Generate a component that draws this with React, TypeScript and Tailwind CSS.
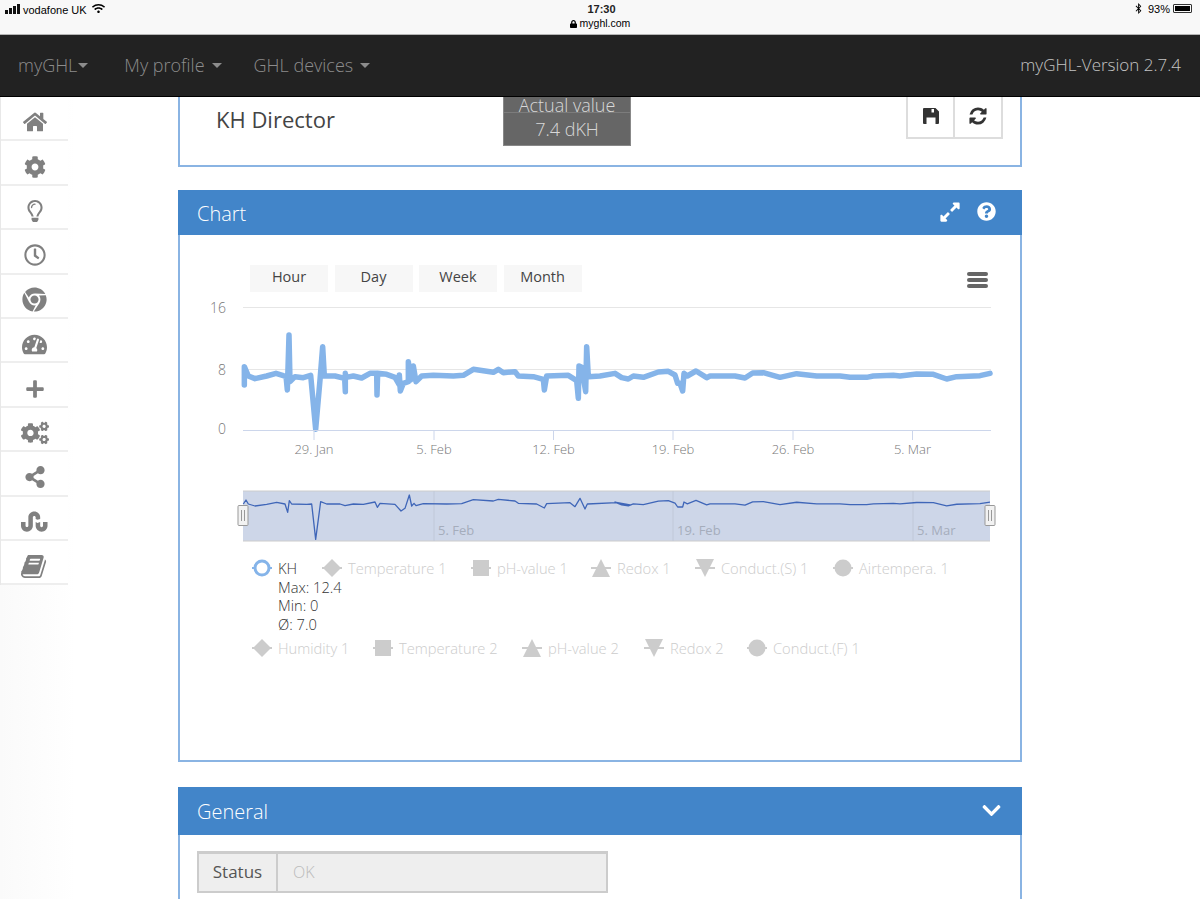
import React from "react";
import {
  FaHome, FaCog, FaRegLightbulb, FaRegClock, FaChrome, FaTachometerAlt, FaPlus, FaCogs,
  FaShareAlt, FaStumbleupon, FaExpandAlt, FaQuestionCircle, FaChevronDown, FaWifi,
  FaBluetoothB, FaLock,
} from "react-icons/fa";

const BookIcon = ({ className }: { className?: string }) => (
  <svg viewBox="0 0 1792 1792" className={className} fill="currentColor">
    <path d="M1639 478q40 57 18 129l-275 906q-19 64-76.5 107.5t-122.5 43.5h-923q-77 0-148.5-53.5t-99.5-131.5q-24-67-2-127 0-4 3-27t4-37q1-8-3-21.5t-3-19.5q2-11 8-21t16.5-23.5 16.5-23.5q23-38 45-91.5t30-91.5q3-10 .5-30t-.5-28q3-11 17-28t17-23q21-36 42-92t25-90q1-9-2.5-32t.5-28q4-13 22-30.5t22-22.5q19-26 42.5-84.5t27.5-96.5q1-8-3-25.5t-2-26.5q2-8 9-18t18-23 17-21q8-12 16.5-30.5t15-35 16-36 19.5-32 26.5-23.5 36-11.5 47.5 5.5l-1 3q38-9 51-9h761q74 0 114 56t18 130l-274 906q-36 119-71.5 153.5t-128.5 34.5h-869q-27 0-38 15-11 16-1 43 24 70 144 70h923q29 0 56-15.5t35-41.5l300-987q7-22 5-57 38 15 59 43zm-1064 2q-4 13 2 22.5t20 9.5h608q13 0 25.5-9.5t16.5-22.5l21-64q4-13-2-22.5t-20-9.5h-608q-13 0-25.5 9.5t-16.5 22.5zm-83 256q-4 13 2 22.5t20 9.5h608q13 0 25.5-9.5t16.5-22.5l21-64q4-13-2-22.5t-20-9.5h-608q-13 0-25.5 9.5t-16.5 22.5z" />
  </svg>
);

const RefreshIcon = ({ className }: { className?: string }) => (
  <svg viewBox="0 0 1792 1792" className={className} fill="currentColor">
    <path d="M1639 1056q0 5-1 7-64 268-268 434.5t-478 166.5q-146 0-282.5-55t-243.5-157l-129 129q-19 19-45 19t-45-19-19-45v-448q0-26 19-45t45-19h448q26 0 45 19t19 45-19 45l-137 137q71 66 161 102t187 36q134 0 250-65t186-179q11-17 53-117 8-23 30-23h192q13 0 22.5 9.5t9.5 22.5zm25-800v448q0 26-19 45t-45 19h-448q-26 0-45-19t-19-45 19-45l138-138q-148-137-349-137-134 0-250 65t-186 179q-11 17-53 117-8 23-30 23h-199q-13 0-22.5-9.5t-9.5-22.5v-7q65-268 270-434.5t480-166.5q146 0 284 55.5t245 156.5l130-129q19-19 45-19t45 19 19 45z" />
  </svg>
);

const FloppyIcon = ({ className }: { className?: string }) => (
  <svg viewBox="0 0 16 16" className={className}>
    <path fillRule="evenodd" fill="currentColor" d="M1 0H12.5L16 3.5V15a1 1 0 0 1-1 1H1a1 1 0 0 1-1-1V1a1 1 0 0 1 1-1zM8.5 1V4.5H11V1zM3.5 9.5V16H12.5V9.5z" />
  </svg>
);

const z5: number[][] = [[133,285],[133,230],[145,258],[165,266],[200,258],[228,250],[250,257],[258,258],[262,300],[267,135],[270,275],[285,260],[310,263],[332,256],[347,418],[360,270],[368,170],[373,258],[405,258],[434,265],[436,305],[436,250],[438,262],[460,258],[485,264],[510,250],[530,250],[531,315],[533,250],[560,253],[585,262],[598,285],[598,255],[601,303],[610,280],[625,275],[625,215],[632,270],[640,228],[648,275],[665,258],[700,256],[760,258],[790,256],[820,238],[880,247],[895,238],[910,248],[945,245],[955,258],[1000,260],[1030,268],[1033,300],[1040,258],[1105,256],[1130,272],[1135,325],[1137,228],[1145,232],[1157,305],[1160,170],[1165,260],[1200,258]];
const z6: number[][] = [[0,258],[45,250],[65,263],[85,267],[100,258],[130,262],[175,246],[205,244],[225,255],[233,280],[240,280],[248,303],[252,250],[262,258],[288,243],[320,263],[330,258],[385,258],[405,258],[435,264],[458,249],[490,248],[540,262],[590,251],[650,258],[720,258],[750,262],[800,262],[820,258],[880,256],[900,258],[950,252],[1000,253],[1040,267],[1070,260],[1140,257],[1170,250]];
const mainPts = [
  ...z5.map(([x, y]) => [200 + x / 3, 290 + y / 3]),
  ...z6.map(([x, y]) => [600 + x / 3, 290 + y / 3]),
].map((p) => p.join(",")).join(" ");

const z7: number[][] = [[40,72],[48,60],[55,72],[75,78],[110,73],[140,67],[165,72],[173,97],[178,62],[185,72],[230,73],[245,72],[257,178],[272,65],[290,72],[330,72],[345,77],[370,72],[400,73],[435,66],[442,82],[450,70],[495,73],[513,93],[525,85],[538,45],[545,78],[552,70],[558,77],[580,71],[650,72],[695,71],[730,59],[790,63],[805,58],[855,63],[865,70],[920,72],[943,84],[950,71],[1020,68],[1035,80],[1050,55],[1065,87],[1072,72],[1160,68],[1200,75]];
const navRight: number[][] = z6
  .filter(([x]) => x > 10)
  .map(([x, y]) => [600 + x / 3, Math.min(507, 540 - (430 - (290 + y / 3)) * 0.67)]);
const navPts = [
  ...z7.map(([x, y]) => [230 + x / 3, 480 + y / 3]),
  ...navRight,
].map((p) => p.join(",")).join(" ");

const sideIcons = [
  <FaHome className="w-[24px] h-[24px]" />,
  <FaCog className="w-[22px] h-[22px]" />,
  <FaRegLightbulb className="w-[22px] h-[22px]" />,
  <FaRegClock className="w-[22px] h-[22px]" />,
  <FaChrome className="w-[25px] h-[25px]" />,
  <FaTachometerAlt className="w-[25px] h-[25px]" />,
  <FaPlus className="w-[20px] h-[20px]" />,
  <FaCogs className="w-[28px] h-[26px]" />,
  <FaShareAlt className="w-[22px] h-[22px]" />,
  <FaStumbleupon className="w-[27px] h-[27px]" />,
  <BookIcon className="w-[27px] h-[27px]" />,
];

type Shape = "circle" | "diamond" | "square" | "up" | "down" | "hex";

const Marker = ({ shape }: { shape: Shape }) => (
  <svg viewBox="0 0 20 20" className="w-[20px] h-[20px] shrink-0">
    {shape === "circle" && (
      <>
        <line x1="0" y1="10" x2="20" y2="10" stroke="#85b4e9" strokeWidth="2" />
        <circle cx="10" cy="10" r="7" fill="#fff" stroke="#85b4e9" strokeWidth="3" />
      </>
    )}
    {shape !== "circle" && <line x1="0" y1="10" x2="20" y2="10" stroke="#ccc" strokeWidth="2" />}
    {shape === "diamond" && <polygon points="10,1 19,10 10,19 1,10" fill="#ccc" />}
    {shape === "square" && <rect x="2" y="2" width="16" height="16" fill="#ccc" />}
    {shape === "up" && <polygon points="10,1 19,19 1,19" fill="#ccc" />}
    {shape === "down" && <polygon points="1,1 19,1 10,19" fill="#ccc" />}
    {shape === "hex" && <circle cx="10" cy="10" r="8.5" fill="#ccc" />}
  </svg>
);

const LegendItem = ({ shape, label, w }: { shape: Shape; label: string; w: string }) => (
  <div className={`flex items-center gap-[6px] text-[14.7px] leading-[18px] font-light text-[#ccc] whitespace-nowrap ${w}`}>
    <Marker shape={shape} />
    <span>{label}</span>
  </div>
);

const Tick = ({ x, label }: { x: number; label: string }) => (
  <>
    <line x1={x} y1="430" x2={x} y2="440" stroke="#ccd6eb" />
    <text x={x} y="454" textAnchor="middle" fontSize="13" fontWeight="300" fill="#777">{label}</text>
  </>
);

const NavTick = ({ x, label }: { x: number; label: string }) => (
  <>
    <line x1={x} y1="491" x2={x} y2="541" stroke="#c0c8d8" />
    <text x={x + 4} y="535" fontSize="13" fill="#a5adbc">{label}</text>
  </>
);

const Handle = ({ x }: { x: number }) => (
  <>
    <rect x={x - 5} y="505.5" width="10" height="20" rx="1" fill="#f2f2f2" stroke="#999" />
    <line x1={x - 1.5} y1="510" x2={x - 1.5} y2="521" stroke="#999" />
    <line x1={x + 1.5} y1="510" x2={x + 1.5} y2="521" stroke="#999" />
  </>
);

export default function App() {
  return (
    <div className="w-[1200px] h-[899px] overflow-hidden bg-white flex flex-col font-['Open_Sans',sans-serif] text-[#333]">
      {/* iOS status bar */}
      <div className="h-[35px] shrink-0 bg-[#f8f8f8] border-b border-[#b5b5b5] flex justify-between px-[5px] pt-[3px] font-['Liberation_Sans',sans-serif] text-black">
        <div className="flex items-start w-[300px] gap-[4px]">
          <div className="flex items-end gap-[1px] h-[10px] mt-[1px]">
            <div className="w-[3px] h-[4px] bg-[#111]" />
            <div className="w-[3px] h-[6px] bg-[#111]" />
            <div className="w-[3px] h-[8px] bg-[#111]" />
            <div className="w-[3px] h-[10px] bg-[#111]" />
          </div>
          <span className="text-[11px] leading-[14px] ml-[-1px]">vodafone UK</span>
          <FaWifi className="w-[13px] h-[11px] ml-[1px]" />
        </div>
        <div className="flex flex-col items-center leading-none">
          <span className="text-[11px] leading-[13px] font-bold text-[#222] ml-[3px]">17:30</span>
          <span className="text-[10.5px] leading-[13px] flex items-center gap-[3px] mt-[1px]">
            <FaLock className="w-[7px] h-[8px]" />
            myghl.com
          </span>
        </div>
        <div className="flex items-start justify-end w-[300px] gap-[3px]">
          <FaBluetoothB className="w-[9px] h-[11px] mr-[2px]" />
          <span className="text-[11px] leading-[13px]">93%</span>
          <div className="w-[19px] h-[9px] border border-[#333] p-[1px] mt-[1px] rounded-[1px] mr-[3px]">
            <div className="w-full h-full bg-black" />
          </div>
        </div>
      </div>

      {/* Navbar */}
      <div className="h-[62px] shrink-0 bg-[#222] border-b border-black flex items-center justify-between pl-[18px] pr-[19px] text-[18px] font-light text-[#8c8c8c]">
        <div className="flex items-center">
          <span>myGHL</span>
          <span className="w-0 h-0 border-x-[5px] border-x-transparent border-t-[5px] border-t-[#8c8c8c] ml-[1px]" />
          <span className="ml-[36px]">My profile</span>
          <span className="w-0 h-0 border-x-[5px] border-x-transparent border-t-[5px] border-t-[#8c8c8c] ml-[7px]" />
          <span className="ml-[32px]">GHL devices</span>
          <span className="w-0 h-0 border-x-[5px] border-x-transparent border-t-[5px] border-t-[#8c8c8c] ml-[7px]" />
        </div>
        <span className="text-[#c4c4c4] text-[17px] -mt-[1px]">myGHL-Version 2.7.4</span>
      </div>

      <div className="flex flex-1 min-h-0">
        {/* Sidebar */}
        <div className="w-[75px] shrink-0 bg-gradient-to-r from-[#fafafa] to-white">
          <div className="w-[68px] border-l border-[#e8e8e8] bg-white">
            {sideIcons.map((icon, i) => (
              <div key={i} className="h-[44.4px] pt-[8px] flex items-center justify-center border-b-2 border-[#eeeeee] text-[#808080]">
                {icon}
              </div>
            ))}
          </div>
        </div>

        {/* Main */}
        <div className="w-[844px] ml-[103px] flex flex-col">
          {/* KH Director panel */}
          <div className="relative h-[70px] shrink-0 border-x-2 border-b-2 border-[#8ab4e3] flex items-start justify-end pr-[17px]">
            <div className="absolute left-[36px] top-[5px] text-[22px] leading-[34px] text-[#444]">KH Director</div>
            <div className="absolute left-[323px] top-0 w-[128px] h-[49px] bg-[#666] border border-[#888] border-t-0 text-[#d8d8d8] font-light flex flex-col items-center">
              <div className="h-[16px] w-full border-b border-[#7c7c7c] leading-[16px] text-center text-[18px]">Actual value</div>
              <div className="flex-1 flex items-center text-[18px]">7.4 dKH</div>
            </div>
            <div className="flex border-2 border-t-0 border-[#ddd] h-[42px]">
              <div className="w-[47px] flex items-center justify-center border-r-2 border-[#ddd] text-[#333] pb-[2px]">
                <FloppyIcon className="w-[16px] h-[16px]" />
              </div>
              <div className="w-[46px] flex items-center justify-center text-[#333] pb-[2px]">
                <RefreshIcon className="w-[20px] h-[20px]" />
              </div>
            </div>
          </div>

          {/* Chart panel */}
          <div className="h-[572px] shrink-0 mt-[23px] border-2 border-t-0 border-[#8ab4e3] flex flex-col">
            <div className="h-[45px] -mx-[2px] bg-[#4285c9] flex items-center justify-between pl-[19px] pr-[26px] text-white">
              <span className="text-[20px] font-light mt-[3px]">Chart</span>
              <div className="flex items-center gap-[16px]">
                <FaExpandAlt className="w-[22px] h-[22px] -mt-[2px]" />
                <FaQuestionCircle className="w-[19px] h-[19px] -mt-[3px]" />
              </div>
            </div>
            <div className="flex justify-between items-start pl-[70px] pr-[32px] pt-[30px] h-[60px]">
              <div className="flex gap-[6.5px]">
                {["Hour", "Day", "Week", "Month"].map((b) => (
                  <div key={b} className="w-[78px] h-[27px] pb-[4px] bg-[#f7f7f7] flex items-center justify-center text-[14.5px] text-[#444]">{b}</div>
                ))}
              </div>
              <div className="flex flex-col gap-[2px] w-[21px] mt-[7px]">
                <div className="h-[4px] rounded-full bg-[#666]" />
                <div className="h-[4px] rounded-full bg-[#666]" />
                <div className="h-[4px] rounded-full bg-[#666]" />
              </div>
            </div>
            <svg viewBox="200 295 800 255" width="800" height="255" className="block ml-[20px] shrink-0 font-['Open_Sans',sans-serif]">
              <line x1="243" y1="307.5" x2="991" y2="307.5" stroke="#e6e6e6" />
              <line x1="243" y1="369.5" x2="991" y2="369.5" stroke="#e6e6e6" />
              <text x="226" y="313" textAnchor="end" fontSize="14" fontWeight="300" fill="#777">16</text>
              <text x="226" y="375" textAnchor="end" fontSize="14" fontWeight="300" fill="#777">8</text>
              <text x="226" y="434" textAnchor="end" fontSize="14" fontWeight="300" fill="#777">0</text>
              <polyline points={mainPts} fill="none" stroke="#85b4e9" strokeWidth="5.5" strokeLinejoin="round" strokeLinecap="round" />
              <line x1="243" y1="430.5" x2="991" y2="430.5" stroke="#ccd6eb" />
              <Tick x={314} label="29. Jan" />
              <Tick x={434} label="5. Feb" />
              <Tick x={553.5} label="12. Feb" />
              <Tick x={673} label="19. Feb" />
              <Tick x={793} label="26. Feb" />
              <Tick x={912.5} label="5. Mar" />
              <rect x="243" y="491" width="747" height="50" fill="#cdd6e8" />
              <line x1="243" y1="491" x2="990" y2="491" stroke="#ccc" />
              <line x1="243" y1="541" x2="990" y2="541" stroke="#ccc" />
              <NavTick x={434} label="5. Feb" />
              <NavTick x={673} label="19. Feb" />
              <NavTick x={913} label="5. Mar" />
              <polyline points={navPts} fill="none" stroke="#3f66b8" strokeWidth="1.3" strokeLinejoin="round" />
              <Handle x={243} />
              <Handle x={990} />
            </svg>
            <div className="pl-[72px] pt-[8px]">
              <div className="flex h-[80px] items-start">
                <div className="w-[70px] flex flex-col text-[14.7px] leading-[18.3px] font-light whitespace-nowrap">
                  <div className="flex items-center gap-[6px]">
                    <Marker shape="circle" />
                    <span>KH</span>
                  </div>
                  <div className="pl-[26px]">Max: 12.4</div>
                  <div className="pl-[26px]">Min: 0</div>
                  <div className="pl-[26px]">Ø: 7.0</div>
                </div>
                <LegendItem shape="diamond" label="Temperature 1" w="w-[149px]" />
                <LegendItem shape="square" label="pH-value 1" w="w-[120px]" />
                <LegendItem shape="up" label="Redox 1" w="w-[104px]" />
                <LegendItem shape="down" label="Conduct.(S) 1" w="w-[138px]" />
                <LegendItem shape="hex" label="Airtempera. 1" w="w-[130px]" />
              </div>
              <div className="flex">
                <LegendItem shape="diamond" label="Humidity 1" w="w-[121px]" />
                <LegendItem shape="square" label="Temperature 2" w="w-[149px]" />
                <LegendItem shape="up" label="pH-value 2" w="w-[122px]" />
                <LegendItem shape="down" label="Redox 2" w="w-[103px]" />
                <LegendItem shape="hex" label="Conduct.(F) 1" w="w-[130px]" />
              </div>
            </div>
          </div>

          {/* General panel */}
          <div className="mt-[25px] flex-1 border-x-2 border-[#8ab4e3]">
            <div className="h-[48px] -mx-[2px] bg-[#4285c9] flex items-center justify-between pl-[19px] pr-[20px] text-white">
              <span className="text-[20px] font-light mt-[2px]">General</span>
              <FaChevronDown className="w-[21px] h-[21px] -mt-[2px]" />
            </div>
            <div className="pl-[17px] pt-[16px]">
              <div className="flex w-[411px] h-[42px] bg-[#eee] border-2 border-[#ccc] border-t-[3px]">
                <div className="w-[79px] flex items-center justify-center border-r-2 border-[#ccc] text-[#555] text-[17px] pb-[2px]">Status</div>
                <div className="flex-1 flex items-center pl-[15px] text-[#bbb] font-light text-[16px] pb-[2px]">OK</div>
              </div>
            </div>
          </div>
        </div>
      </div>
    </div>
  );
}
